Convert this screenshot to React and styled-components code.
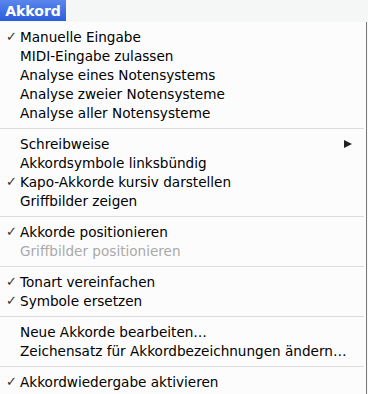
import React from "react";
import styled, { createGlobalStyle } from "styled-components";

const Global = createGlobalStyle`
  html, body { margin: 0; padding: 0; background: #f6f8f7; }
  body { font-family: "DejaVu Sans", "Liberation Sans", sans-serif; }
`;

const Page = styled.div`
  width: 368px;
  height: 394px;
  overflow: hidden;
  display: flex;
  flex-direction: column;
`;

const MenuBar = styled.div`
  height: 22px;
  display: flex;
  background: #f5f7f6;
`;

const Title = styled.div`
  width: 66px;
  height: 21px;
  display: flex;
  align-items: center;
  justify-content: center;
  color: #fff;
  font-size: 14px;
  font-weight: bold;
  background: linear-gradient(#5a86ec, #2a5ddc);
`;

const Menu = styled.div`
  flex: 1;
  width: 367px;
  background: #fcfcfc;
  border-right: 1px solid #7a7a7a;
  padding-top: 5px;
  box-sizing: border-box;
`;

const Item = styled.div`
  position: relative;
  height: 19px;
  display: flex;
  align-items: center;
  padding-left: 20px;
  font-size: 13.6px;
  color: ${({ disabled }) => (disabled ? "#a9a9a9" : "#000")};
  white-space: nowrap;
`;

const Check = styled.span`
  position: absolute;
  left: 6px;
  font-size: 13px;
  color: #333;
`;

const Arrow = styled.span`
  position: absolute;
  right: 14px;
  width: 0;
  height: 0;
  border-top: 4.5px solid transparent;
  border-bottom: 4.5px solid transparent;
  border-left: 8px solid #222;
`;

const Separator = styled.div`
  height: 12px;
  display: flex;
  align-items: center;
  &::after {
    content: "";
    flex: 1;
    margin-right: 2px;
    border-top: 1px solid #dcdcdc;
  }
`;

const groups = [
  [
    { label: "Manuelle Eingabe", checked: true },
    { label: "MIDI-Eingabe zulassen" },
    { label: "Analyse eines Notensystems" },
    { label: "Analyse zweier Notensysteme" },
    { label: "Analyse aller Notensysteme" },
  ],
  [
    { label: "Schreibweise", submenu: true },
    { label: "Akkordsymbole linksbündig" },
    { label: "Kapo-Akkorde kursiv darstellen", checked: true },
    { label: "Griffbilder zeigen" },
  ],
  [
    { label: "Akkorde positionieren", checked: true },
    { label: "Griffbilder positionieren", disabled: true },
  ],
  [
    { label: "Tonart vereinfachen", checked: true },
    { label: "Symbole ersetzen", checked: true },
  ],
  [
    { label: "Neue Akkorde bearbeiten…" },
    { label: "Zeichensatz für Akkordbezeichnungen ändern…" },
  ],
  [{ label: "Akkordwiedergabe aktivieren", checked: true }],
];

export default function App() {
  return (
    <Page>
      <Global />
      <MenuBar>
        <Title>Akkord</Title>
      </MenuBar>
      <Menu>
        {groups.map((group, gi) => (
          <React.Fragment key={gi}>
            {gi > 0 && <Separator />}
            {group.map((it) => (
              <Item key={it.label} disabled={it.disabled}>
                {it.checked && <Check>✓</Check>}
                {it.label}
                {it.submenu && <Arrow />}
              </Item>
            ))}
          </React.Fragment>
        ))}
      </Menu>
    </Page>
  );
}
